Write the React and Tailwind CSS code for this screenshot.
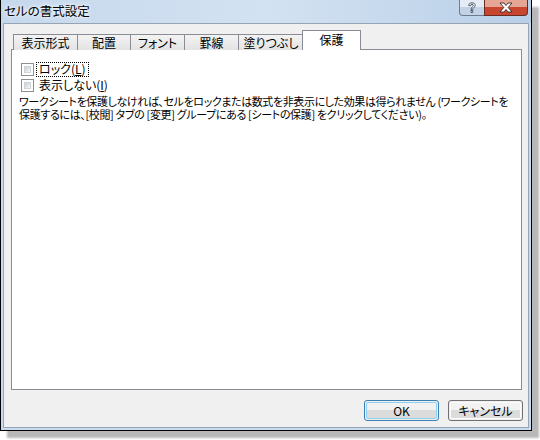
import React from "react";

const font = "font-['Noto_Sans_CJK_JP','Noto_Sans',sans-serif] [font-feature-settings:'palt']";

function Tab({ label, w, selected }) {
  if (selected) {
    return (
      <div
        className={`relative z-10 -mx-[2px] h-[20px] self-end border border-b-0 border-[#898c95] bg-white flex items-center justify-center text-[12px] text-black`}
        style={{ width: w + 4 }}
      >
        <span className="-mt-[1px]">{label}</span>
      </div>
    );
  }
  return (
    <div
      className="h-[16px] -ml-px first:ml-0 self-end border border-b-0 border-[#898c95] bg-gradient-to-b from-[#f3f3f3] to-[#e3e3e3] flex items-center justify-center text-[12px] text-black"
      style={{ width: w }}
    >
      <span className="mt-[1px]">{label}</span>
    </div>
  );
}

function Checkbox() {
  return (
    <div className="w-[13px] h-[13px] border border-[#8e8f8f] bg-white p-[2px] shrink-0">
      <div className="w-full h-full bg-gradient-to-br from-[#cbcfd5] to-[#f6f6f6] border border-[#d0d4d9]" />
    </div>
  );
}

function Button({ children, focused }) {
  return (
    <div
      className={`w-[75px] h-[21px] rounded-[3px] border ${
        focused ? "border-[#3c7fb1]" : "border-[#707070]"
      } p-px`}
    >
      <div
        className={`w-full h-full rounded-[2px] ${
          focused ? "border border-[#8fd0f0]" : "border border-[#fcfcfc]"
        } bg-gradient-to-b from-[#f2f2f2] from-50% to-[#dcdcdc] to-50% flex items-center justify-center text-[12px] text-black leading-none`}
      >
        {children}
      </div>
    </div>
  );
}

export default function App() {
  return (
    <div className={`w-[540px] h-[440px] bg-white relative overflow-hidden ${font}`}>
      <div className="w-[532px] h-[431px] border-x border-b border-black flex flex-col shadow-[7px_7px_2px_rgba(0,0,0,0.28)] relative bg-[#c9dbee]">
        {/* Title bar */}
        <div className="h-[23px] shrink-0 bg-gradient-to-r from-[#c5d8ec] via-[#d3e2f2] to-[#b9cfe7] flex items-center pl-[3px] relative">
          <span className="text-[12.5px] text-black leading-none -mt-[1px] [text-shadow:0_0_6px_#ffffff,0_0_3px_#ffffff]">
            セルの書式設定
          </span>
          {/* help & close */}
          <div className="absolute top-0 right-[3px] flex h-[16px]">
            <div className="w-[26px] h-full border border-t-0 border-[#6e7d90] rounded-bl-[4px] bg-gradient-to-b from-[#e4ecf6] from-50% to-[#c3d2e4] to-50% flex items-center justify-center">
              <svg width="10" height="12" viewBox="0 0 9 11">
                <path
                  d="M1.5 3.2 C1.5 1.2 3 0.8 4.5 0.8 C6.2 0.8 7.5 1.6 7.5 3.2 C7.5 4.7 5.2 5 5.2 6.8 L3.6 6.8 C3.6 4.7 5.8 4.3 5.8 3.2 C5.8 2.5 5.2 2.2 4.5 2.2 C3.7 2.2 3.2 2.6 3.2 3.4 Z M3.6 7.8 L5.2 7.8 L5.2 9.6 L3.6 9.6 Z"
                  fill="#f4f6f9"
                  stroke="#3d4a5a"
                  strokeWidth="0.8"
                />
              </svg>
            </div>
            <div className="w-[44px] h-full -ml-px border border-t-0 border-[#6b2a22] rounded-br-[4px] bg-gradient-to-b from-[#e5a695] from-50% to-[#c8452f] to-50% flex items-center justify-center">
              <svg width="14" height="11" viewBox="0 0 14 11">
                <path
                  d="M1 1 L5 1 L7 3.5 L9 1 L13 1 L9.2 5.5 L13 10 L9 10 L7 7.5 L5 10 L1 10 L4.8 5.5 Z"
                  fill="#ffffff"
                  stroke="#3a2a28"
                  strokeWidth="0.9"
                  strokeLinejoin="round"
                />
              </svg>
            </div>
          </div>
        </div>

        {/* frame + client */}
        <div className="flex-1 px-[2px] pb-[2px]">
          <div className="w-full h-full border border-[#97a4b4] bg-[#f0f0f0] flex flex-col">
            {/* tab strip */}
            <div className="pl-[7px] pr-[6px] pt-[6px]">
              <div className="flex h-[20px] pl-[2px] items-end">
                <Tab label="表示形式" w={65} />
                <Tab label="配置" w={54} />
                <Tab label="フォント" w={55} />
                <Tab label="罫線" w={55} />
                <Tab label="塗りつぶし" w={66} />
                <Tab label="保護" w={55} selected />
              </div>
              {/* panel */}
              <div className="h-[341px] -mt-px border border-[#898c95] bg-white pl-[9px] pt-[12px]">
                <div className="flex items-center h-[14px]">
                  <Checkbox />
                  <span className="ml-[2px] px-[2px] h-[15px] border border-dotted border-black flex items-center text-[12px] leading-none text-black">
                    ロック(<span className="underline">L</span>)
                  </span>
                </div>
                <div className="flex items-center h-[14px] mt-[2px]">
                  <Checkbox />
                  <span className="ml-[5px] text-[12px] leading-none text-black">
                    表示しない(<span className="underline">I</span>)
                  </span>
                </div>
                <div className="mt-[3px] -ml-[2px] text-[11px] leading-[13px] text-black whitespace-nowrap">
                  <div className="tracking-[-0.4px]">ワークシートを保護しなければ、セルをロックまたは数式を非表示にした効果は得られません (ワークシートを</div>
                  <div className="tracking-[-0.35px]">保護するには、[校閲] タブの [変更] グループにある [シートの保護] をクリックしてください)。</div>
                </div>
              </div>
            </div>
            {/* buttons */}
            <div className="flex justify-end gap-[9px] pr-[5px] pt-[10px]">
              <Button focused>OK</Button>
              <Button>キャンセル</Button>
            </div>
          </div>
        </div>
      </div>
    </div>
  );
}
